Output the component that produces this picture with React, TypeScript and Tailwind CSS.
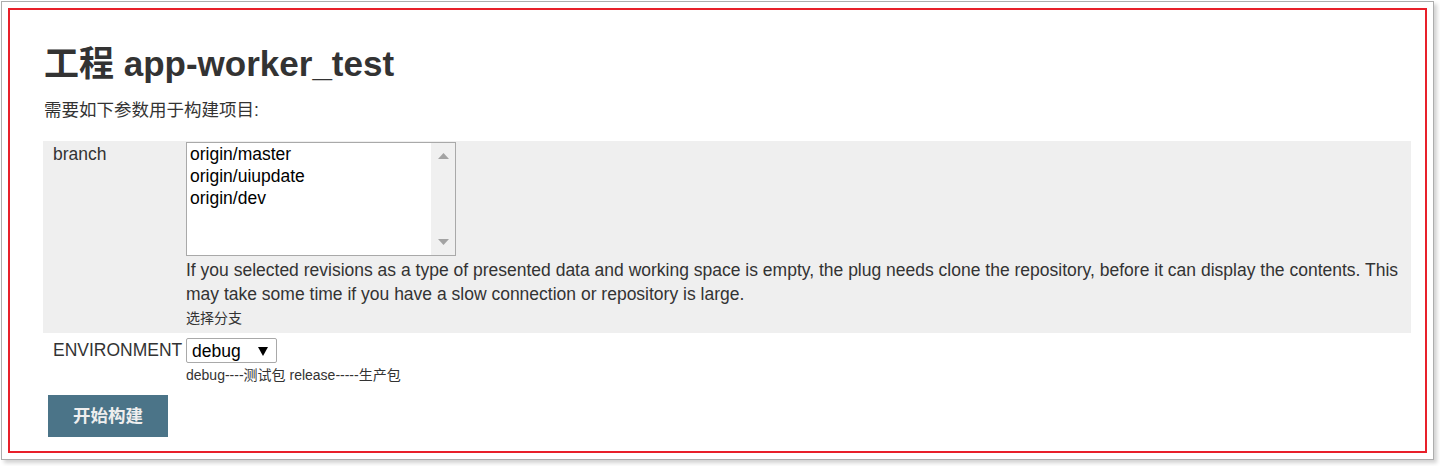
import React from "react";

export default function App() {
  return (
    <div className="min-h-[466px] w-[1440px] bg-white pl-px pt-px font-['Liberation_Sans','Noto_Sans_CJK_SC',Arial,sans-serif] text-[#333]">
      <div className="h-[459px] w-[1433px] border border-[#adadad] bg-white p-[6px] shadow-[3px_3px_4px_rgba(0,0,0,0.18)]">
        <div className="h-[445px] w-[1419px] border-2 border-[#e8202a] pl-[33px] pr-[13px]">
          <h1 className="ml-px mt-[34px] text-[35px] font-bold leading-[40px] text-[#333]">
            工程 app-worker_test
          </h1>
          <p className="ml-px mt-[14px] text-[17.5px] leading-[24px]">需要如下参数用于构建项目:</p>

          <div className="mt-[19px] w-[1368px]">
            {/* branch row */}
            <div className="flex bg-[#efefef] pb-[5px] pt-px">
              <div className="w-[143px] shrink-0 pl-[10px] text-[17.5px] leading-[24px]">branch</div>
              <div className="flex-1 pr-[6px]">
                <div className="flex h-[114px] w-[270px] border border-[#a9a9a9] bg-white">
                  <div className="flex-1 pl-[3px] text-[17.5px] leading-[22px] text-black">
                    <div>origin/master</div>
                    <div>origin/uiupdate</div>
                    <div>origin/dev</div>
                  </div>
                  <div className="flex w-[24px] flex-col items-center justify-between bg-[#f0f0f0] pb-[10px] pt-[10px]">
                    <svg width="11" height="6" viewBox="0 0 11 6">
                      <polygon points="5.5,0 11,6 0,6" fill="#a3a3a3" />
                    </svg>
                    <svg width="11" height="6" viewBox="0 0 11 6">
                      <polygon points="0,0 11,0 5.5,6" fill="#a3a3a3" />
                    </svg>
                  </div>
                </div>
                <p className="mt-[2px] text-[17.5px] leading-[24px]">
                  If you selected revisions as a type of presented data and working space is empty, the plug needs clone the repository, before it can display the contents. This may take some time if you have a slow connection or repository is large.
                </p>
                <p className="mt-[2px] text-[14px] leading-[20px]">选择分支</p>
              </div>
            </div>

            {/* environment row */}
            <div className="flex pt-[5px]">
              <div className="w-[143px] shrink-0 pl-[10px] text-[17.5px] leading-[25px]">ENVIRONMENT</div>
              <div className="flex-1">
                <div className="flex h-[25px] w-[91px] items-center justify-between rounded-[2px] border border-[#a9a9a9] bg-white pl-[5px] pr-[8px] text-[17.5px] text-black">
                  <span className="leading-[22px]">debug</span>
                  <svg width="10" height="10" viewBox="0 0 10 10">
                    <polygon points="0,1 10,1 5,10" fill="#000" />
                  </svg>
                </div>
                <p className="mt-[2px] text-[14px] leading-[20px]">debug----测试包 release-----生产包</p>
              </div>
            </div>

            <button className="ml-[5px] mt-[10px] flex h-[42px] w-[120px] items-center justify-center bg-[#4b7488] text-[17.5px] font-bold text-[#eeeeee]">
              开始构建
            </button>
          </div>
        </div>
      </div>
    </div>
  );
}
